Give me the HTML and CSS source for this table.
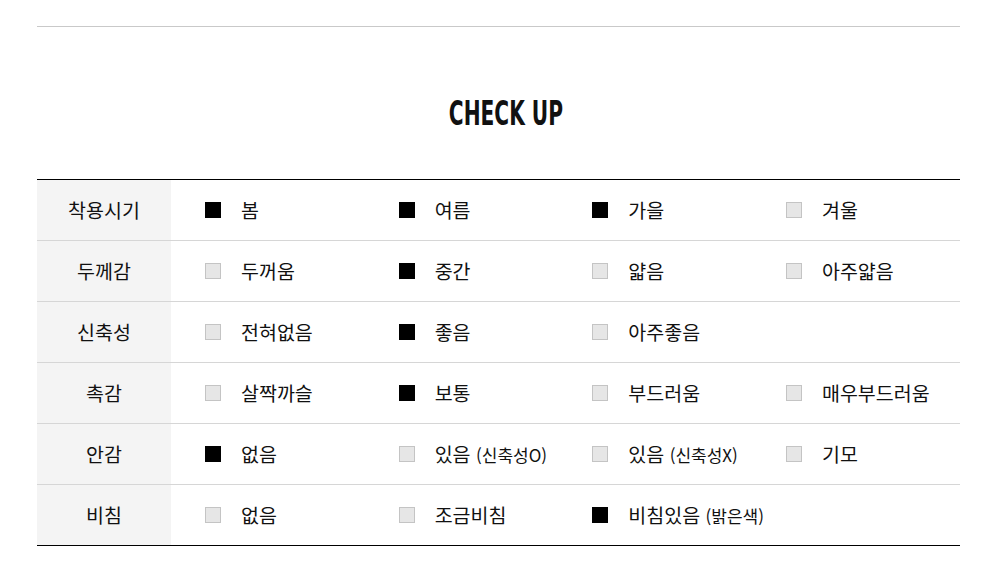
FILE: index.html
```html
<!DOCTYPE html>
<html lang="ko">
<head>
<meta charset="utf-8">
<link rel="stylesheet" href="styles.css">
</head>
<body>
<div class="wrap">
  <div class="title-box">
    <h2 class="title">CHECK UP</h2>
  </div>
  <div class="grid">
    <div class="row">
      <div class="head">착용시기</div>
      <div class="cell"><span class="box on"></span><span class="txt">봄</span></div>
      <div class="cell"><span class="box on"></span><span class="txt">여름</span></div>
      <div class="cell"><span class="box on"></span><span class="txt">가을</span></div>
      <div class="cell"><span class="box"></span><span class="txt">겨울</span></div>
      <div class="cell"></div>
    </div>
    <div class="row">
      <div class="head">두께감</div>
      <div class="cell"><span class="box"></span><span class="txt">두꺼움</span></div>
      <div class="cell"><span class="box on"></span><span class="txt">중간</span></div>
      <div class="cell"><span class="box"></span><span class="txt">얇음</span></div>
      <div class="cell"><span class="box"></span><span class="txt">아주얇음</span></div>
      <div class="cell"></div>
    </div>
    <div class="row">
      <div class="head">신축성</div>
      <div class="cell"><span class="box"></span><span class="txt">전혀없음</span></div>
      <div class="cell"><span class="box on"></span><span class="txt">좋음</span></div>
      <div class="cell"><span class="box"></span><span class="txt">아주좋음</span></div>
      <div class="cell"></div>
      <div class="cell"></div>
    </div>
    <div class="row">
      <div class="head">촉감</div>
      <div class="cell"><span class="box"></span><span class="txt">살짝까슬</span></div>
      <div class="cell"><span class="box on"></span><span class="txt">보통</span></div>
      <div class="cell"><span class="box"></span><span class="txt">부드러움</span></div>
      <div class="cell"><span class="box"></span><span class="txt">매우부드러움</span></div>
      <div class="cell"></div>
    </div>
    <div class="row">
      <div class="head">안감</div>
      <div class="cell"><span class="box on"></span><span class="txt">없음</span></div>
      <div class="cell"><span class="box"></span><span class="txt">있음 <small>(신축성O)</small></span></div>
      <div class="cell"><span class="box"></span><span class="txt">있음 <small>(신축성X)</small></span></div>
      <div class="cell"><span class="box"></span><span class="txt">기모</span></div>
      <div class="cell"></div>
    </div>
    <div class="row">
      <div class="head">비침</div>
      <div class="cell"><span class="box"></span><span class="txt">없음</span></div>
      <div class="cell"><span class="box"></span><span class="txt">조금비침</span></div>
      <div class="cell"><span class="box on"></span><span class="txt">비침있음 <small>(밝은색)</small></span></div>
      <div class="cell"></div>
      <div class="cell"></div>
    </div>
  </div>
</div>
</body>
</html>
```

FILE: styles.css
```css
html, body {
  margin: 0;
  padding: 0;
  background: #fff;
}
body {
  font-family: "Noto Sans CJK KR", "Noto Sans", sans-serif;
  color: #111;
}
.wrap {
  width: 923px;
  margin: 0 0 0 37px;
  padding-top: 26px;
}
.title-box {
  border-top: 1px solid #c9c9c9;
  height: 153px;
  display: flex;
  align-items: center;
  justify-content: center;
  padding-left: 14px;
  padding-top: 20px;
  box-sizing: border-box;
}
.title {
  margin: 0;
  font-family: "DejaVu Sans Condensed", "Liberation Sans", sans-serif;
  font-weight: 700;
  font-size: 33px;
  line-height: 1;
  color: #111;
  transform: scaleX(0.68);
}
.grid {
  border-top: 1px solid #000;
  border-bottom: 1px solid #000;
}
.row {
  display: grid;
  grid-template-columns: 134px repeat(4, 193.67px) 1fr;
  height: 60px;
  border-top: 1px solid #d6d6d6;
}
.row:first-child {
  border-top: 0;
}
.head {
  background: #f4f4f4;
  display: flex;
  align-items: center;
  justify-content: center;
  font-size: 19.5px;
  padding-bottom: 1px;
  box-sizing: border-box;
}
.cell {
  display: flex;
  align-items: center;
  padding-left: 34px;
  gap: 20px;
}
.box {
  width: 16px;
  height: 16px;
  box-sizing: border-box;
  background: #e6e6e6;
  border: 1px solid #c4c4c4;
  flex: none;
}
.box.on {
  background: #000;
  border-color: #000;
}
.txt {
  font-size: 19.5px;
  white-space: nowrap;
  padding-bottom: 1px;
}
.txt small {
  font-size: 17px;
}
```
